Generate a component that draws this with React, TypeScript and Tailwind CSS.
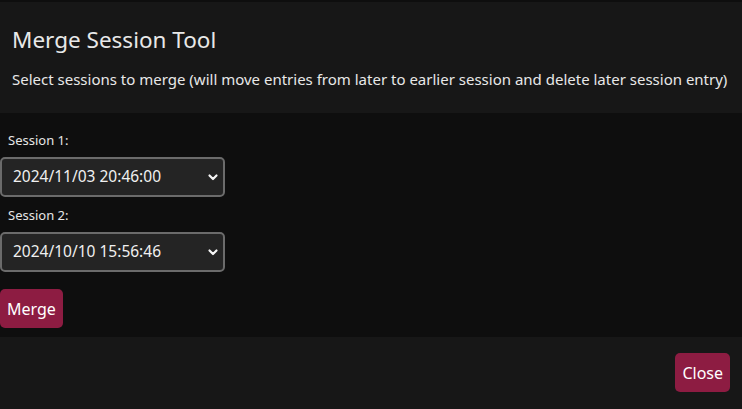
import React, { useState } from 'react';

const sessions = ['2024/11/03 20:46:00', '2024/10/10 15:56:46'];

function SessionSelect({ label, value, onChange }: { label: string; value: string; onChange: (v: string) => void }) {
  return (
    <div className="flex flex-col">
      <label className="text-[13px] text-[#e6e6e6] pl-2 pt-[9px] pb-[8px] leading-[18px]">{label}</label>
      <div className="relative w-[225px]">
        <select
          value={value}
          onChange={e => onChange(e.target.value)}
          className="appearance-none w-full h-[40px] rounded-[5px] border-2 border-[#6b6b6b] bg-[#242424] text-[#f0f0f0] text-[15.5px] pl-[11px] pr-8 outline-none"
        >
          {sessions.map(s => (
            <option key={s} value={s}>{s}</option>
          ))}
        </select>
        <svg
          className="absolute right-[6px] top-[15px] pointer-events-none"
          width="12"
          height="10"
          viewBox="0 0 12 10"
          fill="none"
          stroke="#f5f5f5"
          strokeWidth="2.2"
          strokeLinecap="round"
          strokeLinejoin="round"
        >
          <path d="M2.5 3.5 L6 7 L9.5 3.5" />
        </svg>
      </div>
    </div>
  );
}

export default function App() {
  const [s1, setS1] = useState(sessions[0]);
  const [s2, setS2] = useState(sessions[1]);

  return (
    <div className="w-[742px] h-[409px] flex flex-col bg-[#0e0e0e] font-['Noto_Sans',sans-serif] overflow-hidden">
      <div className="mt-[2px] h-[111px] bg-[#171717] px-3 pt-[23px]">
        <h2 className="text-[22.5px] leading-[30px] text-[#e8e8e8]">Merge Session Tool</h2>
        <p className="mt-[14px] text-[15px] leading-[20px] text-[#e8e8e8] whitespace-nowrap">
          Select sessions to merge (will move entries from later to earlier session and delete later session entry)
        </p>
      </div>
      <div className="h-[224px] flex flex-col items-start pt-[9px]">
        <SessionSelect label="Session 1:" value={s1} onChange={setS1} />
        <SessionSelect label="Session 2:" value={s2} onChange={setS2} />
        <button className="mt-[17px] h-[39px] px-[7px] rounded-[5px] bg-[#8d1c42] text-white text-[16px]">Merge</button>
      </div>
      <div className="flex-1 bg-[#171717] flex justify-end items-start pt-[16px] pr-3">
        <button className="h-[39px] px-[7px] rounded-[5px] bg-[#8d1c42] text-white text-[16px]">Close</button>
      </div>
    </div>
  );
}
